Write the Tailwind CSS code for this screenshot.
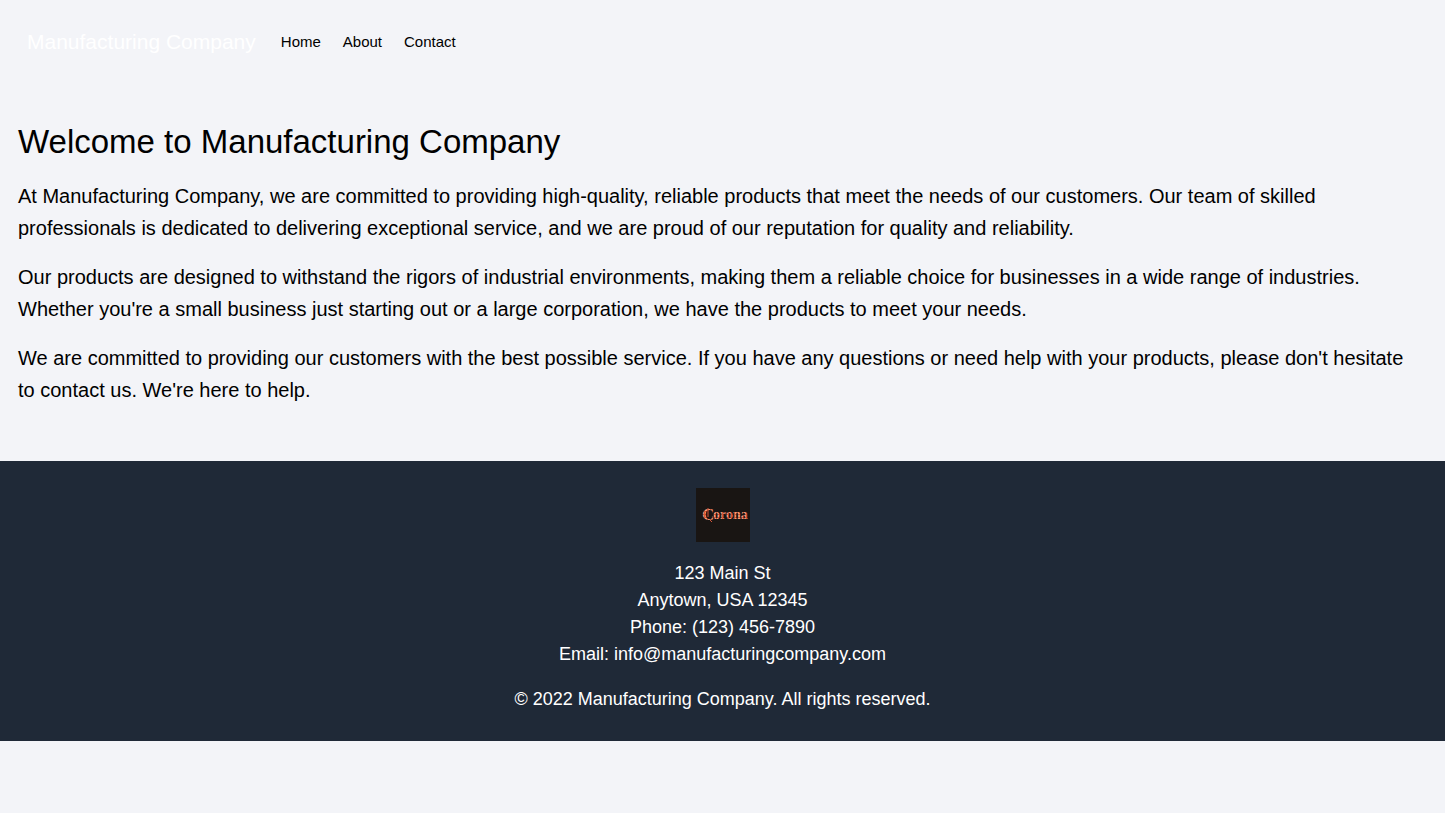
<!DOCTYPE html>
<html lang="en">
<head>
  <meta charset="UTF-8">
  <meta name="viewport" content="width=device-width, initial-scale=1.0">
  <title>Manufacturing Company</title>
  <script src="https://cdn.jsdelivr.net/npm/@tailwindcss/browser@4"></script>
</head>
<body class="bg-[#f3f4f8] text-black font-['Liberation_Sans',Arial,sans-serif]">
  <nav class="flex flex-wrap items-center p-[27px]">
    <a href="#" class="mr-[25px] text-[21px] leading-[30px] text-white">Manufacturing Company</a>
    <div class="flex gap-[22px] text-[15px] leading-[28px]">
      <a href="#">Home</a>
      <a href="#">About</a>
      <a href="#">Contact</a>
    </div>
  </nav>

  <main class="pl-[18px] pr-[24px] pt-[37px] pb-[55px]">
    <h1 class="mb-[17px] text-[33px] leading-[42px]">Welcome to Manufacturing Company</h1>
    <div class="space-y-[17px] text-[20px] leading-[32px]">
      <p>At Manufacturing Company, we are committed to providing high-quality, reliable products that meet the needs of our customers. Our team of skilled professionals is dedicated to delivering exceptional service, and we are proud of our reputation for quality and reliability.</p>
      <p>Our products are designed to withstand the rigors of industrial environments, making them a reliable choice for businesses in a wide range of industries. Whether you're a small business just starting out or a large corporation, we have the products to meet your needs.</p>
      <p>We are committed to providing our customers with the best possible service. If you have any questions or need help with your products, please don't hesitate to contact us. We're here to help.</p>
    </div>
  </main>

  <footer class="bg-[#1f2937] pt-[27px] pb-[28px] text-center text-[18px] leading-[27px] text-white">
    <svg class="mx-auto mb-[18px] size-[54px]" viewBox="0 0 54 54" role="img" aria-label="Corona">
      <defs>
        <pattern id="bulbs" width="3" height="3" patternUnits="userSpaceOnUse">
          <rect width="3" height="3" fill="#d8583c" />
          <rect width="2" height="2" fill="#f59a78" />
        </pattern>
      </defs>
      <rect width="54" height="54" fill="#191513" />
      <g fill="url(#bulbs)" font-weight="bold">
        <text x="6" y="32" font-size="17" font-family="Liberation Serif">C</text>
        <text x="17" y="31" font-size="14" font-family="Liberation Sans Narrow, Liberation Serif">orona</text>
      </g>
      <path d="M12 20v9M14 32l2 2" stroke="#d8583c" fill="none" />
    </svg>
    <address class="not-italic">
      123 Main St<br>
      Anytown, USA 12345<br>
      Phone: (123) 456-7890<br>
      Email: info@manufacturingcompany.com
    </address>
    <p class="mt-[18px]">© 2022 Manufacturing Company. All rights reserved.</p>
  </footer>
</body>
</html>
